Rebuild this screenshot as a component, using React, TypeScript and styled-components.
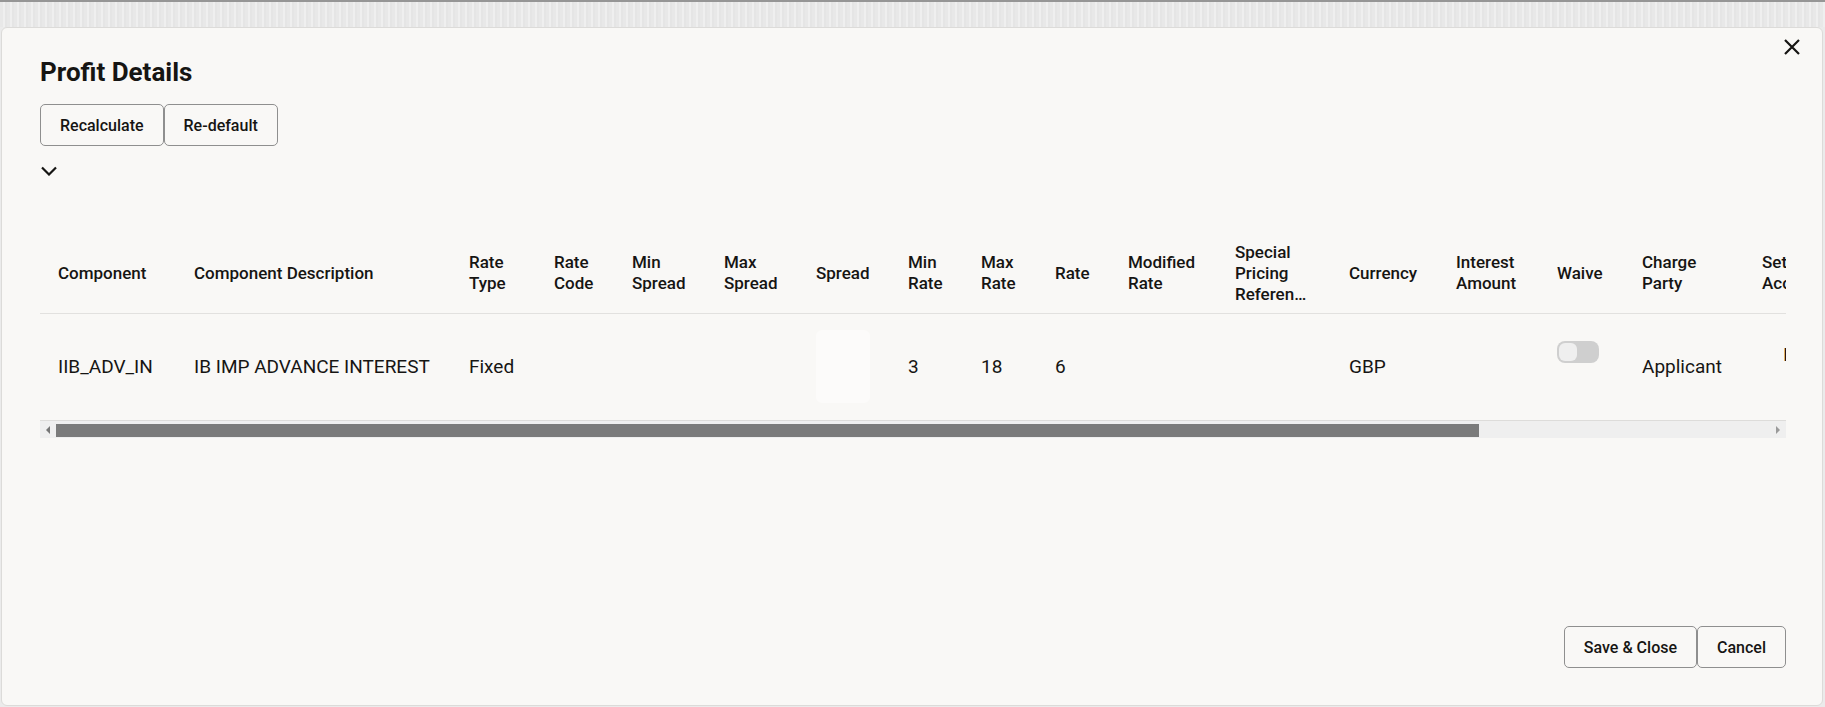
import React from 'react';
import styled, { createGlobalStyle } from 'styled-components';

type Column = {
    key: string;
    label: string;
    width: number;
};

const columns: Column[] = [
    { key: 'component', label: 'Component', width: 136 },
    { key: 'description', label: 'Component Description', width: 275 },
    { key: 'rateType', label: 'Rate Type', width: 85 },
    { key: 'rateCode', label: 'Rate Code', width: 78 },
    { key: 'minSpread', label: 'Min Spread', width: 92 },
    { key: 'maxSpread', label: 'Max Spread', width: 92 },
    { key: 'spread', label: 'Spread', width: 92 },
    { key: 'minRate', label: 'Min Rate', width: 73 },
    { key: 'maxRate', label: 'Max Rate', width: 74 },
    { key: 'rate', label: 'Rate', width: 73 },
    { key: 'modifiedRate', label: 'Modified Rate', width: 107 },
    { key: 'specialPricing', label: 'Special Pricing Referen…', width: 114 },
    { key: 'currency', label: 'Currency', width: 107 },
    { key: 'interestAmount', label: 'Interest Amount', width: 101 },
    { key: 'waive', label: 'Waive', width: 85 },
    { key: 'chargeParty', label: 'Charge Party', width: 120 },
    { key: 'settlement', label: 'Settlement Account', width: 170 },
    { key: 'remarks', label: 'Remarks', width: 229 },
];

const row: Record<string, string> = {
    component: 'IIB_ADV_IN',
    description: 'IB IMP ADVANCE INTEREST',
    rateType: 'Fixed',
    rateCode: '',
    minSpread: '',
    maxSpread: '',
    minRate: '3',
    maxRate: '18',
    rate: '6',
    modifiedRate: '',
    specialPricing: '',
    currency: 'GBP',
    interestAmount: '',
    chargeParty: 'Applicant',
    settlement: 'IB0001203003',
    remarks: '',
};

const TABLE_WIDTH = columns.reduce((sum, c) => sum + c.width, 0);
const VIEWPORT_WIDTH = 1746;

const GlobalStyle = createGlobalStyle`
    html, body {
        margin: 0;
        padding: 0;
    }
    body {
        background: #ebebeb;
        font-family: Roboto, 'Liberation Sans', Arial, sans-serif;
        color: #161513;
    }
    * {
        box-sizing: border-box;
    }
`;

const Page = styled.div`
    width: 1825px;
    height: 707px;
    display: flex;
    flex-direction: column;
    overflow: hidden;
`;

const Backdrop = styled.div`
    flex: none;
    height: 27px;
    border-top: 2px solid #969696;
    background: repeating-linear-gradient(90deg, #e8e8e8 0 3px, #efefef 3px 5px, #e5e5e5 5px 7px);
`;

const Dialog = styled.section`
    flex: 1;
    min-height: 0;
    margin: 0 2px 1px 1px;
    background: #f9f8f6;
    border: 1px solid #dcdbd9;
    border-radius: 6px;
    display: flex;
    flex-direction: column;
    padding: 11px 36px 37px 38px;
`;

const Header = styled.header`
    display: flex;
    justify-content: space-between;
    align-items: flex-start;
`;

const Title = styled.h1`
    margin: 17px 0 0;
    font-size: 26px;
    line-height: 32px;
    font-weight: 700;
`;

const CloseButton = styled.button`
    width: 16px;
    height: 16px;
    margin-right: -14px;
    padding: 0;
    border: 0;
    background: none;
    display: flex;
    cursor: pointer;
`;

const Toolbar = styled.div`
    display: flex;
    margin-top: 16px;
`;

const Footer = styled.footer`
    display: flex;
    justify-content: flex-end;
    margin-top: auto;
`;

const Button = styled.button`
    height: 42px;
    padding: 0 19px;
    border: 1px solid #8f8f8f;
    border-radius: 5px;
    background: transparent;
    font-family: Roboto, 'Liberation Sans', Arial, sans-serif;
    font-size: 16px;
    font-weight: 500;
    color: #161513;
    cursor: pointer;
`;

const ExpandToggle = styled.button`
    width: 18px;
    height: 10px;
    margin-top: 20px;
    padding: 0;
    border: 0;
    background: none;
    display: flex;
`;

const TableViewport = styled.div`
    margin-top: 58px;
    width: ${VIEWPORT_WIDTH}px;
    overflow: hidden;
`;

const Table = styled.table`
    width: ${TABLE_WIDTH}px;
    table-layout: fixed;
    border-collapse: collapse;
`;

const Col = styled.col<{ $width: number }>`
    width: ${(p) => p.$width}px;
`;

const HeadCell = styled.th`
    height: 79px;
    padding: 0 12px 0 18px;
    text-align: left;
    vertical-align: middle;
    font-size: 17px;
    line-height: 21px;
    font-weight: 500;
    border-bottom: 1px solid #e2e1df;
`;

const BodyCell = styled.td`
    height: 107px;
    padding: 0 12px 0 18px;
    vertical-align: middle;
    font-size: 19px;
    font-weight: 400;
    white-space: nowrap;
    overflow: hidden;
`;

const SpreadInput = styled.div`
    width: 54px;
    height: 73px;
    border-radius: 6px;
    background: #fcfbfa;
`;

const Switch = styled.div`
    position: relative;
    width: 42px;
    height: 22px;
    margin-bottom: 29px;
    border-radius: 8px;
    background: #cfcfcf;

    &::after {
        content: '';
        position: absolute;
        left: 2px;
        top: 2px;
        width: 18px;
        height: 18px;
        border-radius: 6px;
        background: #efefef;
    }
`;

const AccountValue = styled.div`
    padding: 0 0 25px 21px;
`;

const Scrollbar = styled.div`
    display: flex;
    align-items: center;
    height: 18px;
    border-top: 1px solid #dddcda;
    background: #efefef;
`;

const ScrollArrow = styled.div<{ $dir: 'left' | 'right' }>`
    flex: none;
    width: 16px;
    display: flex;
    justify-content: center;

    &::before {
        content: '';
        border-top: 4px solid transparent;
        border-bottom: 4px solid transparent;
        ${(p) => (p.$dir === 'left' ? 'border-right: 4px solid #777;' : 'border-left: 4px solid #9a9a9a;')}
    }
`;

const ScrollTrack = styled.div`
    flex: 1;
    height: 13px;
    margin-top: 2px;
`;

const ScrollThumb = styled.div`
    height: 100%;
    background: #7b7b7b;
`;

const renderCell = (key: string) => {
    if (key === 'spread') return <SpreadInput />;
    if (key === 'waive') return <Switch role="switch" aria-checked="false" />;
    if (key === 'settlement') return <AccountValue>{row.settlement}</AccountValue>;
    return row[key];
};

const App = () => {
    const thumbRatio = VIEWPORT_WIDTH / TABLE_WIDTH;

    return (
        <>
            <GlobalStyle />
            <Page>
                <Backdrop />
                <Dialog>
                    <Header>
                        <Title>Profit Details</Title>
                        <CloseButton aria-label="Close">
                            <svg width="16" height="16" viewBox="0 0 16 16">
                                <path d="M1 1 L15 15 M15 1 L1 15" stroke="#161513" strokeWidth="2.2" />
                            </svg>
                        </CloseButton>
                    </Header>
                    <Toolbar>
                        <Button>Recalculate</Button>
                        <Button>Re-default</Button>
                    </Toolbar>
                    <ExpandToggle aria-label="Expand">
                        <svg width="18" height="10" viewBox="0 0 18 10">
                            <polyline points="2,1.5 9,8.5 16,1.5" fill="none" stroke="#161513" strokeWidth="2.2" />
                        </svg>
                    </ExpandToggle>
                    <TableViewport>
                        <Table>
                            <colgroup>
                                {columns.map((c) => (
                                    <Col key={c.key} $width={c.width} />
                                ))}
                            </colgroup>
                            <thead>
                                <tr>
                                    {columns.map((c) => (
                                        <HeadCell key={c.key}>{c.label}</HeadCell>
                                    ))}
                                </tr>
                            </thead>
                            <tbody>
                                <tr>
                                    {columns.map((c) => (
                                        <BodyCell key={c.key}>{renderCell(c.key)}</BodyCell>
                                    ))}
                                </tr>
                            </tbody>
                        </Table>
                        <Scrollbar>
                            <ScrollArrow $dir="left" />
                            <ScrollTrack>
                                <ScrollThumb style={{ width: `${thumbRatio * 100}%` }} />
                            </ScrollTrack>
                            <ScrollArrow $dir="right" />
                        </Scrollbar>
                    </TableViewport>
                    <Footer>
                        <Button>Save &amp; Close</Button>
                        <Button>Cancel</Button>
                    </Footer>
                </Dialog>
            </Page>
        </>
    );
};

export default App;
